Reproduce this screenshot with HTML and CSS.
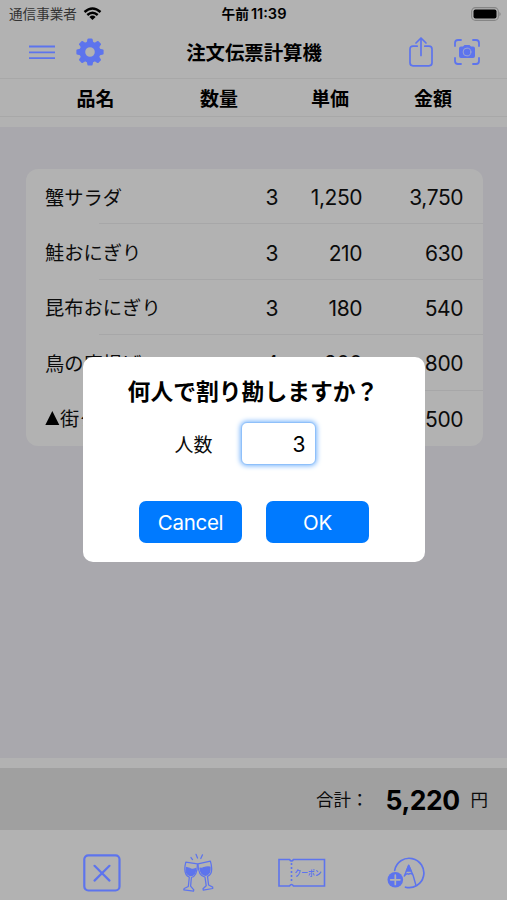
FILE: index.html
```html
<!DOCTYPE html>
<html lang="ja">
<head>
<meta charset="utf-8">
<title>注文伝票計算機</title>
<link rel="stylesheet" href="styles.css">
</head>
<body>
<div class="app">
  <header class="status">
    <div class="carrier"><span>通信事業者</span>
      <svg class="wifi" width="19" height="14" viewBox="0 0 18 14" fill="none" stroke="#000" stroke-width="2.4"><path d="M1 5Q9-2.2 17 5M3.8 8Q9 3.4 14.2 8"/><path d="M9 13L5.9 9.9Q9 7.3 12.1 9.9Z" fill="#000" stroke="none"/></svg>
    </div>
    <div class="time"><span>午前</span><span>11:39</span></div>
    <svg class="battery" width="30" height="14" viewBox="0 0 30 14"><rect x=".6" y=".6" width="26.8" height="12.8" rx="4" fill="none" stroke="#858585" stroke-width="1.1"/><rect x="2.5" y="2.5" width="23" height="9" rx="2" /><path d="M28.4 4.7Q31 7 28.4 9.3Z" fill="#858585"/></svg>
  </header>
  <nav class="navbar">
    <div class="group left">
      <svg width="28" height="28" viewBox="0 0 28 28" stroke="currentColor" stroke-width="1.8"><path d="M1 8.5h26M1 14.3h26M1 20.2h26"/></svg>
      <svg class="gear" width="28" height="28" viewBox="-14 -14 28 28"><g fill="currentColor"><path fill-rule="evenodd" d="M0-10.5A10.5 10.5 0 1 1 0 10.5A10.5 10.5 0 1 1 0-10.5M0-4.8A4.8 4.8 0 1 0 0 4.8A4.8 4.8 0 1 0 0-4.8"/><path id="tooth" d="M-3.4-9L-2.5-13Q-2.3-13.6-1.5-13.6H1.5Q2.3-13.6 2.5-13L3.4-9Z"/><use href="#tooth" transform="rotate(45)"/><use href="#tooth" transform="rotate(90)"/><use href="#tooth" transform="rotate(135)"/><use href="#tooth" transform="rotate(180)"/><use href="#tooth" transform="rotate(225)"/><use href="#tooth" transform="rotate(270)"/><use href="#tooth" transform="rotate(315)"/></g></svg>
    </div>
    <h1>注文伝票計算機</h1>
    <div class="group right">
      <svg width="24" height="30" viewBox="0 0 24 30" fill="none" stroke="currentColor" stroke-width="1.7" stroke-linecap="round" stroke-linejoin="round"><path d="M8.2 9.2H4Q1 9.2 1 12.2V25.8Q1 28.8 4 28.8H20Q23 28.8 23 25.8V12.2Q23 9.2 20 9.2H15.8M12 18.5V1.2M7 6L12 1L17 6"/></svg>
      <svg width="26" height="26" viewBox="0 0 26 26" fill="none" stroke="currentColor" stroke-width="1.8" stroke-linecap="round"><path d="M1 7V4Q1 1 4 1H7M19 1H22Q25 1 25 4V7M25 19V22Q25 25 22 25H19M7 25H4Q1 25 1 22V19"/><path d="M7 7.5H9L10.5 6H15.5L17 7.5H19Q21 7.5 21 9.5V17Q21 19 19 19H7Q5 19 5 17V9.5Q5 7.5 7 7.5Z" fill="currentColor" stroke="none"/><circle cx="13" cy="13" r="3.9" stroke="#9da5cf" stroke-width="1"/></svg>
    </div>
  </nav>
  <div class="columns"><span>品名</span><span>数量</span><span>単価</span><span>金額</span></div>
  <main>
    <ul class="orders">
      <li><span class="name">蟹サラダ</span><span>3</span><span>1,250</span><span>3,750</span></li>
      <li><span class="name">鮭おにぎり</span><span>3</span><span>210</span><span>630</span></li>
      <li><span class="name">昆布おにぎり</span><span>3</span><span>180</span><span>540</span></li>
      <li><span class="name">鳥の唐揚げ</span><span>4</span><span>200</span><span>800</span></li>
      <li><span class="name"><svg class="mark" width="15" height="14" viewBox="0 0 15 14"><path d="M7.3 0L14.3 14H.3Z"/></svg>街クーポン</span><span></span><span></span><span>500</span></li>
    </ul>
  </main>
  <section class="total"><span class="label">合計：</span><strong>5,220</strong><span class="yen">円</span></section>
  <footer class="toolbar">
    <svg width="38" height="38" viewBox="0 0 38 38" fill="none" stroke="currentColor" stroke-width="2.2" stroke-linecap="round"><rect x="1.3" y="1.3" width="35.2" height="35.2" rx="4"/><path d="M11.5 11.8L26.5 26.6M26.5 11.8L11.5 26.6"/></svg>
    <svg class="cheers" width="32" height="40" viewBox="0 0 32 40" fill="none" stroke="currentColor" stroke-width="1.25" stroke-linejoin="round" stroke-linecap="round"><path d="M3.8 9.2L15.4 10.8C15.5 19 13.5 23.5 9.4 24.5L8.6 33.2L11.8 36.8L11.5 38.2L1.8 36.8L2.2 35.5L6.3 33.5L7.3 24.2C2.8 22.3 1.7 17.5 3.8 9.2Z"/><path d="M16 10.8L28.4 8.2C30.8 16.6 29.5 21.9 25.5 23.4L26.6 32L30.7 34.1V35.5L21.3 37.2L21 35.8L24.2 32.7L23 24.1C18.5 23.3 16 18.7 16 10.8Z"/><path d="M4.5 14.5Q8 15 9 16.1Q11 16.8 13.8 15.5C13.2 21 11.5 23 8.5 22.7C4.8 21.8 3.4 19.2 4.5 14.5ZM18 15.2Q20 16 22 14.6Q25 13.5 28 14.1C28.5 19 27 21.6 23.8 22.3C20.7 22.2 18.6 19.5 18 15.2Z" fill="currentColor"/><path d="M9 4.5L10.5 6.5M14 1.3L15.5 5M20.5 1.8L18.8 5.5"/></svg>
    <svg class="coupon" width="48" height="30" viewBox="0 0 48 30" fill="none" stroke="currentColor" stroke-width="1.6"><path d="M1 1.5H11.5Q13.5 4.5 15.5 1.5H46.5V28H15.5Q13.5 25 11.5 28H1Z"/><path d="M13.5 5V25" stroke-dasharray="2 2"/><text x="16.5" y="17.8" textLength="27" lengthAdjust="spacingAndGlyphs" class="ticket">クーポン</text></svg>
    <svg width="38" height="34" viewBox="0 0 38 34" fill="none" stroke="currentColor" stroke-width="1.7" stroke-linecap="round" stroke-linejoin="round"><path d="M7.7 14.3A14.7 14.7 0 1 1 18.5 31.2"/><circle cx="8.3" cy="23.8" r="7.8" fill="currentColor" stroke="none"/><path d="M8.3 19.2V28.4M3.7 23.8H12.9" stroke="#b2b2b2"/><path d="M17.3 20L21.7 9.5L26 19L29 29.5M17.3 20Q19.5 16.8 21.6 18.2Q24 16.5 26 19" stroke-width="1.4"/><path d="M19.5 15L21.7 9.5L24 15Z" fill="currentColor"/></svg>
  </footer>
</div>
<div class="dialog" role="dialog">
  <h2>何人で割り勘しますか？</h2>
  <div class="field"><label for="people">人数</label><input id="people" value="3"></div>
  <div class="actions"><button>Cancel</button><button>OK</button></div>
</div>
</body>
</html>
```
FILE: styles.css
```css
* { box-sizing: border-box; }
body { margin: 0; font-family: Inter, "Noto Sans CJK JP", sans-serif; color: #0b0b0b; }
h1, h2, ul { margin: 0; padding: 0; }
svg { display: block; flex: none; }
.app { width: 507px; height: 900px; display: flex; flex-direction: column; background: #b2b2b2; overflow: hidden; }
.status { height: 26px; flex: none; display: grid; grid-template-columns: 1fr auto 1fr; align-items: center; padding: 1px 6px 0 9px; }
.carrier { display: flex; align-items: center; gap: 6px; font-size: 13.6px; color: #333; line-height: 20px; }
.time { display: flex; gap: 2px; font-size: 13.7px; font-weight: 600; line-height: 20px; color: #000; margin-right: 2px; }
.time span:last-child { font-size: 14.6px; }
.battery { justify-self: end; }
.navbar { height: 53px; flex: none; display: grid; grid-template-columns: 1fr auto 1fr; align-items: center; padding: 0 27px 0 28px; border-bottom: 1px solid #a8a8a8; }
.group { display: flex; align-items: center; color: #5d74ed; }
.left { gap: 20px; }
.right { gap: 21px; justify-content: flex-end; }
h1 { font-size: 19.4px; line-height: 28px; font-weight: 700; color: #000; padding-top: 1px; }
.columns { height: 38px; flex: none; display: grid; grid-template-columns: 157px 124px 98px 108px; align-items: center; padding-bottom: 1px; border-bottom: 1px solid #a8a8a8; font-size: 19px; font-weight: 700; color: #000; text-align: center; }
.columns span:first-child { padding-left: 34px; }
main { flex: 1; margin: 10px 0; padding: 42px 24px 0 26px; background: #a9a8ad; }
.orders { list-style: none; border-radius: 12px; background: #b2b2b2; }
li { height: 55.4px; display: grid; grid-template-columns: 1fr 40px 84px 101px; align-items: center; padding: 2px 20px 0 19px; font-size: 21px; letter-spacing: -.45px; text-align: right; background: linear-gradient(#a7a7a8, #a7a7a8) 73px 100% / 100% 1px no-repeat; }
li:last-child { background: none; }
.name { display: flex; align-items: center; padding-bottom: 2px; font-size: 19.3px; letter-spacing: 0; text-align: left; white-space: nowrap; }
.mark { fill: #000; }
.total { height: 62px; flex: none; display: flex; align-items: center; justify-content: flex-end; padding-right: 19px; background: #a0a0a0; }
.label, .yen { font-size: 17.5px; padding-bottom: 1px; }
.label { margin-right: 17px; }
strong { font-size: 26.5px; font-weight: 700; letter-spacing: -.5px; color: #000; padding-top: 1px; }
.yen { margin-left: 11px; }
.toolbar { height: 70px; flex: none; display: flex; align-items: center; padding: 16px 82px 0 83px; justify-content: space-between; color: #5d74ed; }
.cheers { margin: 0 1px 0 -1px; }
.coupon { margin: 0 -1px 0 1px; }
.ticket { font-size: 7.5px; font-weight: 700; fill: currentColor; stroke: none; }
.dialog { position: absolute; left: 83px; top: 357px; width: 342px; height: 205px; padding-top: 18px; border-radius: 10px; background: #fff; display: flex; flex-direction: column; align-items: center; }
h2 { font-size: 22.8px; line-height: 34px; font-weight: 700; color: #000; white-space: nowrap; margin-left: -2px; }
.field { display: flex; align-items: center; gap: 28px; margin: 13px 0 0; padding-right: 18px; font-size: 19px; }
input { width: 75px; height: 43px; padding: 2px 9px 0; border: 1px solid #8fc0fa; border-radius: 6px; outline: none; box-shadow: 0 0 5px 1px #79b5fc; background: #fff; font: 21px Inter, sans-serif; text-align: right; }
.actions { display: flex; gap: 24px; margin-top: 36px; }
button { width: 103px; height: 42px; border: 0; border-radius: 7px; background: #007aff; color: #fff; font: 20.5px Inter, sans-serif; letter-spacing: -.3px; padding: 0; }
```
